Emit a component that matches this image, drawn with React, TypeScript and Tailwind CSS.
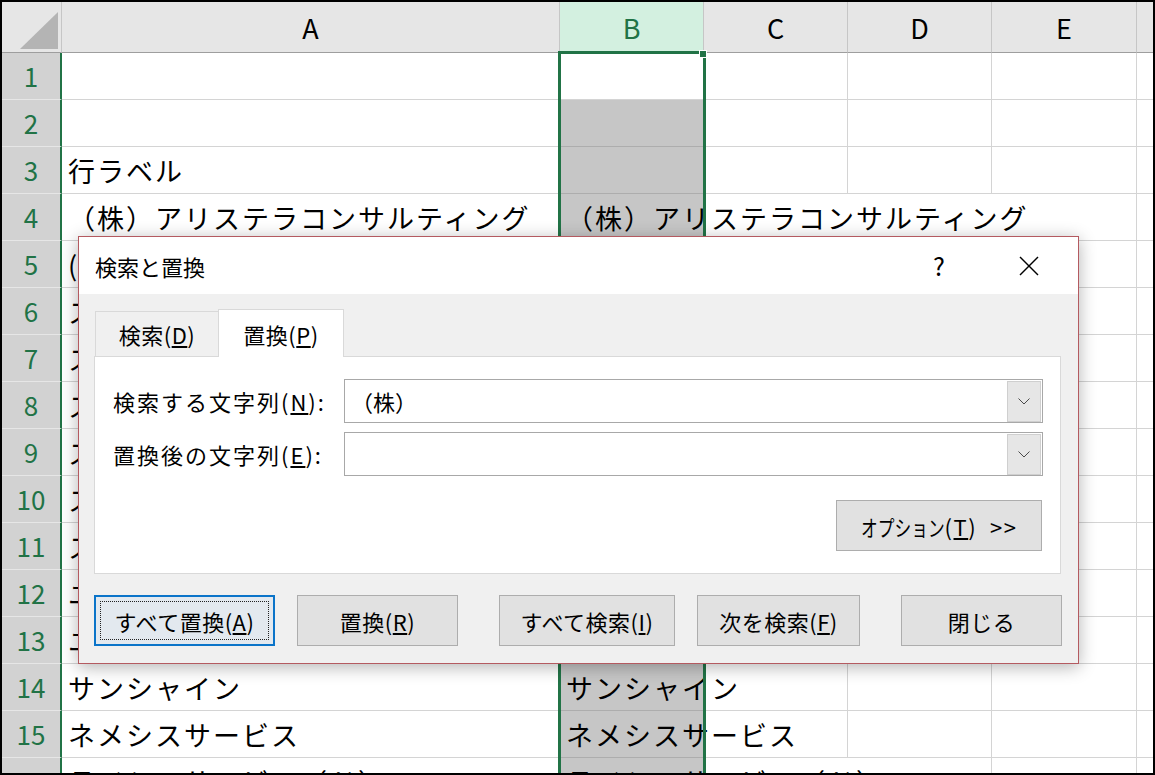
import React from 'react';

const FONT = "font-['Noto_Sans_CJK_JP',sans-serif]";

const aText: Record<number, string> = {
  3: '行ラベル',
  4: '（株）アリステラコンサルティング',
  5: '(株)ミライシステム',
  6: 'スカイテック',
  7: 'スターライト',
  8: 'スマイル工房',
  9: 'スペースワン',
  10: 'スタジオワークス',
  11: 'ステラ商事',
  12: 'ユニバース',
  13: 'ユニオン',
  14: 'サンシャイン',
  15: 'ネメシスサービス',
  16: 'ライシスサービス（ド）',
};

const bText: Record<number, string> = {
  4: '（株）アリステラコンサルティング',
  14: 'サンシャイン',
  15: 'ネメシスサービス',
  16: 'ライシスサービス（ド）',
};

function CellText({ text }: { text?: string }) {
  if (!text) return null;
  return (
    <span className="relative z-10 whitespace-nowrap text-[27px] leading-none tracking-[2px] text-black">
      {text}
    </span>
  );
}

function SheetRow({ r }: { r: number }) {
  const noBorderC = r === 4 || r === 16;
  const noBorderD = r === 4;
  return (
    <>
      <div className="flex items-center justify-center border-b border-[#e6e6e6] border-r-2 border-r-[#217346] bg-[#d2d2d2] text-[26px] leading-none text-[#217346]">
        {r}
      </div>
      <div className="flex items-center border-b border-r border-[#d4d4d4] bg-white pl-[6px]">
        <CellText text={aText[r]} />
      </div>
      <div
        className={
          r === 1
            ? 'flex items-center border-b border-[#d4d4d4] bg-white pl-[6px]'
            : 'flex items-center border-b border-[#adadad] bg-[#c6c6c6] pl-[6px]'
        }
      >
        <CellText text={bText[r]} />
      </div>
      <div
        className={
          noBorderC
            ? 'border-b border-[#d4d4d4] bg-white'
            : 'border-b border-r border-[#d4d4d4] bg-white'
        }
      />
      <div
        className={
          noBorderD
            ? 'border-b border-[#d4d4d4] bg-white'
            : 'border-b border-r border-[#d4d4d4] bg-white'
        }
      />
      <div className="border-b border-r border-[#d4d4d4] bg-white" />
      <div className="border-b border-[#d4d4d4] bg-white" />
    </>
  );
}

function Chevron() {
  return (
    <svg width="12" height="7" viewBox="0 0 12 7">
      <polyline points="0.5,0.5 6,6 11.5,0.5" fill="none" stroke="#4a4a4a" strokeWidth="1" />
    </svg>
  );
}

function ComboInput({ value }: { value?: string }) {
  return (
    <div className="flex h-[44px] flex-1 items-center border border-[#a8a8a8] bg-white">
      <span className="pl-[6px] text-[22px] leading-none">{value}</span>
      <div className="ml-auto mr-px flex h-[41px] w-[34px] items-center justify-center border border-[#cfcfcf] bg-[#e6e6e6]">
        <Chevron />
      </div>
    </div>
  );
}

function Dialog() {
  return (
    <div
      className={`absolute left-[76px] top-[234px] z-30 flex h-[428px] w-[1001px] flex-col border border-[#b45a60] bg-[#f0f0f0] text-black shadow-[0_3px_16px_rgba(0,0,0,0.3)] ${FONT}`}
    >
      {/* title bar */}
      <div className="flex h-[57px] shrink-0 items-center bg-white">
        <span className="ml-[16px] text-[22px] leading-none">検索と置換</span>
        <span className="ml-auto w-[46px] text-center text-[25px] leading-none">?</span>
        <span className="ml-[44px] mr-[26px] flex w-[46px] items-center justify-center">
          <svg width="20" height="20" viewBox="0 0 20 20">
            <line x1="1" y1="1" x2="19" y2="19" stroke="#000" strokeWidth="1.4" />
            <line x1="19" y1="1" x2="1" y2="19" stroke="#000" strokeWidth="1.4" />
          </svg>
        </span>
      </div>

      {/* body */}
      <div className="flex flex-1 flex-col px-[15px] pt-[15px]">
        {/* tabs */}
        <div className="flex h-[47px] items-end pl-px">
          <div className="flex h-[45px] w-[123px] items-center justify-center border-l border-t border-[#d9d9d9] bg-[#f0f0f0] text-[22px] leading-none tracking-[0.5px]">
            検索(<span className="underline underline-offset-2">D</span>)
          </div>
          <div className="relative z-10 -mb-px flex h-[48px] w-[126px] items-center justify-center border-l border-r border-t border-[#d9d9d9] bg-white text-[22px] leading-none tracking-[0.5px]">
            置換(<span className="underline underline-offset-2">P</span>)
          </div>
        </div>

        {/* panel */}
        <div className="flex h-[218px] w-[967px] flex-col border border-[#d9d9d9] bg-white pl-[18px] pr-[17px] pt-[22px]">
          <div className="flex items-center">
            <span className="w-[231px] text-[22px] leading-none tracking-[2px]">
              検索する文字列(<span className="underline underline-offset-2">N</span>):
            </span>
            <ComboInput value="（株）" />
          </div>
          <div className="mt-[9px] flex items-center">
            <span className="w-[231px] text-[22px] leading-none tracking-[2px]">
              置換後の文字列(<span className="underline underline-offset-2">E</span>):
            </span>
            <ComboInput />
          </div>
          <div className="mt-[24px] flex justify-end pr-px">
            <div className="flex h-[51px] w-[206px] items-center justify-center border border-[#adadad] bg-[#e1e1e1] text-[22px] leading-none">
              <span className="-mr-[26px] inline-block origin-left scale-x-[0.76]">オプション</span>
              <span className="tracking-[1.5px]">
                (<span className="underline underline-offset-2">T</span>)&nbsp;&nbsp;&gt;&gt;
              </span>
            </div>
          </div>
        </div>

        {/* buttons */}
        <div className="mt-[21px] flex h-[51px]">
          <div className="relative flex h-[51px] w-[181px] items-center justify-center border-2 border-[#0a74c9] bg-[#e3e9ef] text-[22px] leading-none tracking-[0.5px]">
            <span className="absolute inset-[4px] border border-dotted border-[#222]" />
            すべて置換(<span className="underline underline-offset-2">A</span>)
          </div>
          <div className="ml-[22px] flex h-[51px] w-[161px] items-center justify-center border border-[#adadad] bg-[#e1e1e1] text-[22px] leading-none tracking-[0.5px]">
            置換(<span className="underline underline-offset-2">R</span>)
          </div>
          <div className="ml-[41px] flex h-[51px] w-[176px] items-center justify-center border border-[#adadad] bg-[#e1e1e1] text-[22px] leading-none tracking-[0.5px]">
            すべて検索(<span className="underline underline-offset-2">I</span>)
          </div>
          <div className="ml-[22px] flex h-[51px] w-[163px] items-center justify-center border border-[#adadad] bg-[#e1e1e1] text-[22px] leading-none tracking-[0.5px]">
            次を検索(<span className="underline underline-offset-2">F</span>)
          </div>
          <div className="ml-[41px] flex h-[51px] w-[161px] items-center justify-center border border-[#adadad] bg-[#e1e1e1] text-[22px] leading-none tracking-[0.5px]">
            閉じる
          </div>
        </div>
      </div>
    </div>
  );
}

export default function App() {
  const rows = Array.from({ length: 16 }, (_, i) => i + 1);
  return (
    <div className={`relative h-[775px] w-[1155px] overflow-hidden border-2 border-black bg-white ${FONT}`}>
      <div className="grid grid-cols-[60px_498px_144px_144px_144px_145px_16px] grid-rows-[51px_repeat(16,47px)]">
        {/* header row */}
        <div className="relative border-b border-r border-b-[#9e9e9e] border-r-[#c6c6c6] bg-[#e6e6e6]">
          <svg className="absolute left-0 top-0" width="60" height="50" viewBox="0 0 60 50">
            <polygon points="56,10 18,47 56,47" fill="#b4b4b4" />
          </svg>
        </div>
        <div className="flex items-center justify-center border-b border-r border-b-[#9e9e9e] border-r-[#c6c6c6] bg-[#e6e6e6] text-[27px] leading-none text-black">
          A
        </div>
        <div className="flex items-center justify-center border-b border-r border-b-[#217346] border-r-[#c6c6c6] bg-[#d3f0e0] text-[27px] leading-none text-[#217346]">
          B
        </div>
        <div className="flex items-center justify-center border-b border-r border-b-[#9e9e9e] border-r-[#c6c6c6] bg-[#e6e6e6] text-[27px] leading-none text-black">
          C
        </div>
        <div className="flex items-center justify-center border-b border-r border-b-[#9e9e9e] border-r-[#c6c6c6] bg-[#e6e6e6] text-[27px] leading-none text-black">
          D
        </div>
        <div className="flex items-center justify-center border-b border-r border-b-[#9e9e9e] border-r-[#c6c6c6] bg-[#e6e6e6] text-[27px] leading-none text-black">
          E
        </div>
        <div className="border-b border-b-[#9e9e9e] bg-[#e6e6e6]" />

        {rows.map((r) => (
          <SheetRow key={r} r={r} />
        ))}
      </div>

      {/* column B selection border */}
      <div className="pointer-events-none absolute left-[556px] top-[49px] z-20 h-[760px] w-[148px] border-[3px] border-[#217346]" />
      {/* fill handle */}
      <div className="absolute left-[697px] top-[48px] z-20 h-[8px] w-[8px] border border-white bg-[#217346]" />

      <Dialog />
    </div>
  );
}
